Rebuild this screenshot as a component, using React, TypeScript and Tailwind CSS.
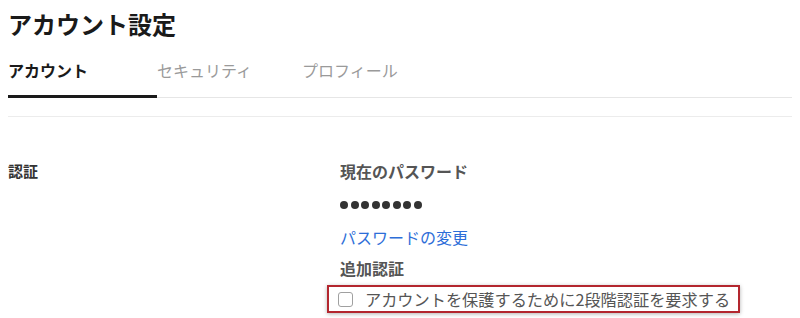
import React from "react";

const tabs = [
  { label: "アカウント", width: "w-[149px]", active: true },
  { label: "セキュリティ", width: "w-[145px]", active: false },
  { label: "プロフィール", width: "w-[145px]", active: false },
];

export default function App() {
  return (
    <div className="w-[800px] h-[318px] overflow-hidden bg-white px-2 font-['Noto_Sans_CJK_JP','Noto_Sans',sans-serif]">
      <h1 className="pt-[6px] text-[24px] leading-[35px] font-bold text-[#1a1a1a]">アカウント設定</h1>

      {/* tabs */}
      <div className="flex border-b border-[#e6e6e6]">
        {tabs.map((t) => (
          <div
            key={t.label}
            className={
              t.active
                ? `${t.width} -mb-px pt-[17px] pb-[12px] border-b-[3px] border-[#1a1a1a] text-[16px] leading-[24px] font-bold text-[#1a1a1a]`
                : `${t.width} pt-[17px] pb-[15px] text-[16px] leading-[24px] text-[#9a9a9a]`
            }
          >
            {t.label}
          </div>
        ))}
      </div>

      <div className="mt-[18px] h-px bg-[#ececec]" />

      {/* auth section */}
      <div className="flex pt-[42px]">
        <div className="w-[332px] shrink-0 text-[15px] leading-[24px] font-bold text-[#333]">認証</div>
        <div className="flex flex-col">
          <div className="text-[16px] leading-[24px] font-bold text-[#555]">現在のパスワード</div>
          <div className="mt-[10px] flex h-[24px] items-center gap-[2.5px]">
            {Array.from({ length: 8 }).map((_, i) => (
              <span key={i} className="h-[8px] w-[8px] rounded-full bg-[#333]" />
            ))}
          </div>
          <a href="#" className="mt-[8px] text-[16px] leading-[24px] text-[#2d6ed8]">
            パスワードの変更
          </a>
          <div className="mt-[7px] text-[16px] leading-[24px] font-bold text-[#555]">追加認証</div>
          <label className="mt-[5px] -ml-[13px] flex h-[28px] w-[413px] shrink-0 items-center border-2 border-[#b3262e] pl-[9px] shadow-[0_1px_4px_rgba(0,0,0,0.3)]">
            <span className="h-[15px] w-[15px] shrink-0 rounded-[3px] border border-[#a0a0a0] bg-white" />
            <span className="ml-[12px] whitespace-nowrap text-[16.2px] leading-[24px] text-[#555]">
              アカウントを保護するために2段階認証を要求する
            </span>
          </label>
        </div>
      </div>
    </div>
  );
}
